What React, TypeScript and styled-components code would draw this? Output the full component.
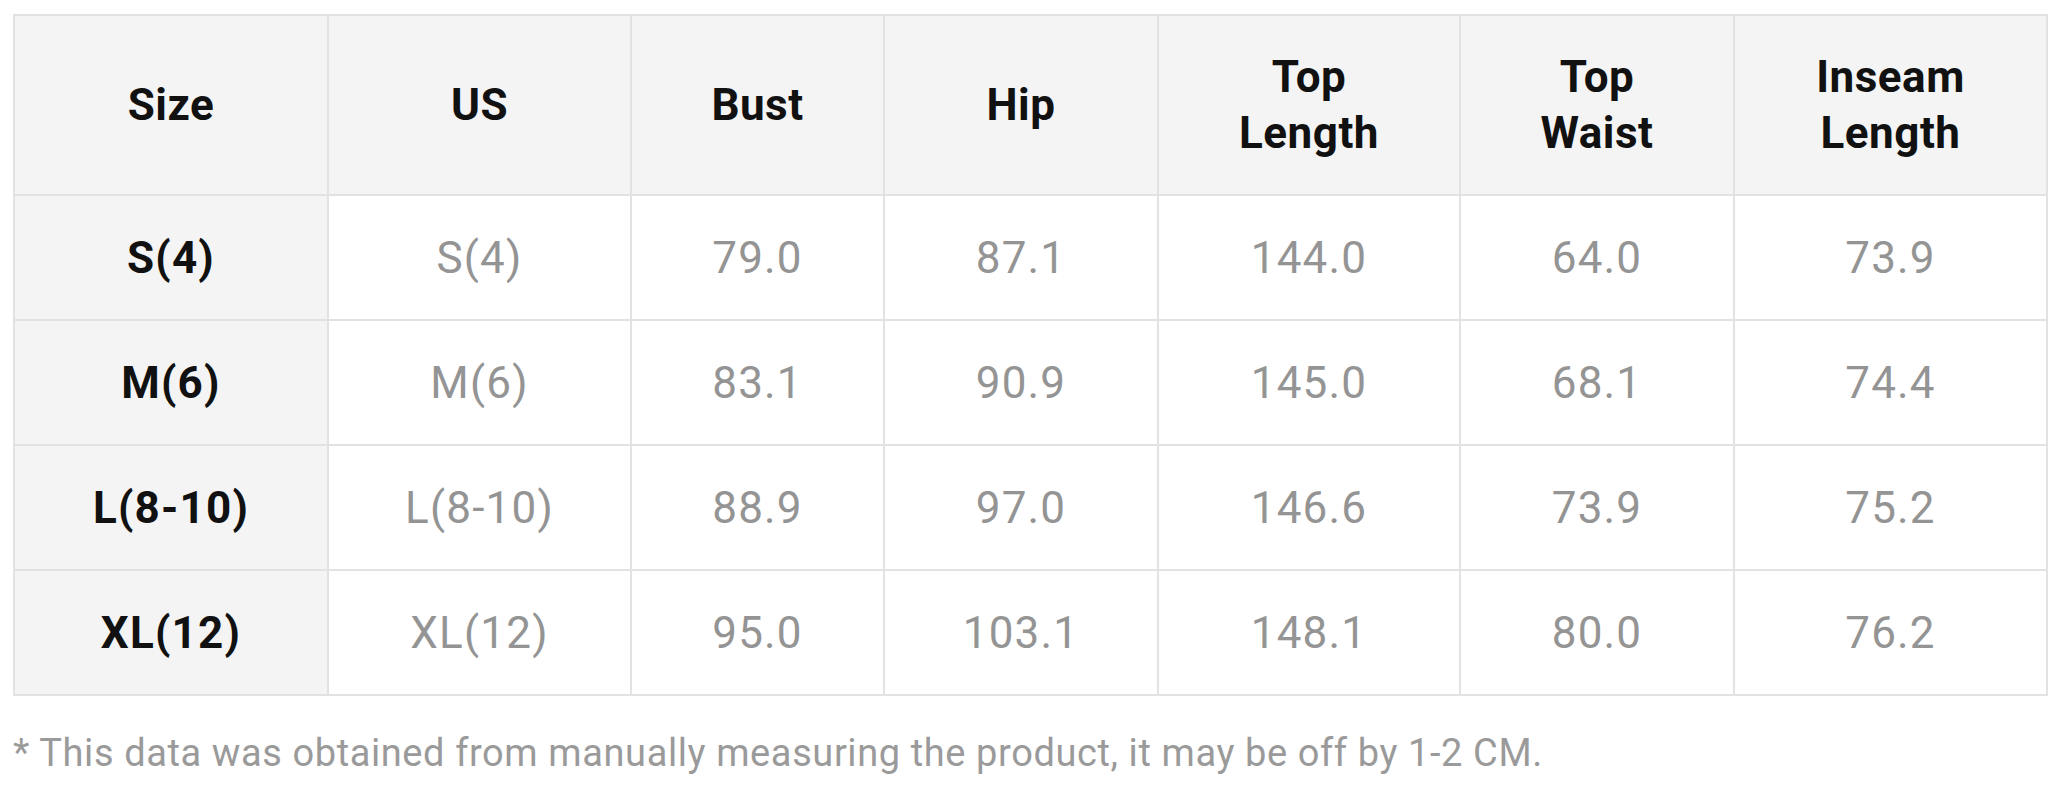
import React from "react";
import styled, { createGlobalStyle } from "styled-components";

const Global = createGlobalStyle`
  html, body { margin: 0; padding: 0; background: #ffffff; }
  body { font-family: Roboto, "Liberation Sans", Arial, sans-serif; }
`;

const Page = styled.div`
  padding: 14px 21px 0 13px;
  width: 2033px;
`;

const Table = styled.table`
  width: 2033px;
  border-collapse: collapse;
  table-layout: fixed;
  border: 2px solid #dcdcdc;
`;

const HeadCell = styled.th`
  height: 180px;
  padding: 0 10px;
  background: #f4f4f4;
  border: 2px solid #e2e2e2;
  color: #111111;
  font-weight: 700;
  font-size: 44px;
  letter-spacing: 0.5px;
  line-height: 56px;
  text-align: center;
  vertical-align: middle;
  box-sizing: border-box;
`;

const Cell = styled.td<{ $label?: boolean }>`
  height: 125px;
  padding: 0 10px;
  background: ${(p) => (p.$label ? "#f4f4f4" : "#ffffff")};
  border: 2px solid #e2e2e2;
  color: ${(p) => (p.$label ? "#111111" : "#949494")};
  font-weight: ${(p) => (p.$label ? 700 : 400)};
  font-size: 44px;
  letter-spacing: 1.2px;
  text-align: center;
  vertical-align: middle;
  box-sizing: border-box;
`;

const Note = styled.p`
  margin: 33px 0 0 0;
  color: #9a9a9a;
  font-size: 38px;
  letter-spacing: 0.6px;
  line-height: 48px;
`;

const widths = [314, 303, 253, 274, 302, 274, 313];
const headers = [["Size"], ["US"], ["Bust"], ["Hip"], ["Top", "Length"], ["Top", "Waist"], ["Inseam", "Length"]];
const rows = [
  ["S(4)", "S(4)", "79.0", "87.1", "144.0", "64.0", "73.9"],
  ["M(6)", "M(6)", "83.1", "90.9", "145.0", "68.1", "74.4"],
  ["L(8-10)", "L(8-10)", "88.9", "97.0", "146.6", "73.9", "75.2"],
  ["XL(12)", "XL(12)", "95.0", "103.1", "148.1", "80.0", "76.2"],
];

export default function App() {
  return (
    <Page>
      <Global />
      <Table>
        <colgroup>
          {widths.map((w, i) => (
            <col key={i} style={{ width: w }} />
          ))}
        </colgroup>
        <thead>
          <tr>
            {headers.map((h, i) => (
              <HeadCell key={i}>
                {h.map((line, j) => (
                  <React.Fragment key={j}>
                    {j > 0 && <br />}
                    {line}
                  </React.Fragment>
                ))}
              </HeadCell>
            ))}
          </tr>
        </thead>
        <tbody>
          {rows.map((r, i) => (
            <tr key={i}>
              {r.map((v, j) => (
                <Cell key={j} $label={j === 0}>
                  {v}
                </Cell>
              ))}
            </tr>
          ))}
        </tbody>
      </Table>
      <Note>* This data was obtained from manually measuring the product, it may be off by 1-2 CM.</Note>
    </Page>
  );
}
